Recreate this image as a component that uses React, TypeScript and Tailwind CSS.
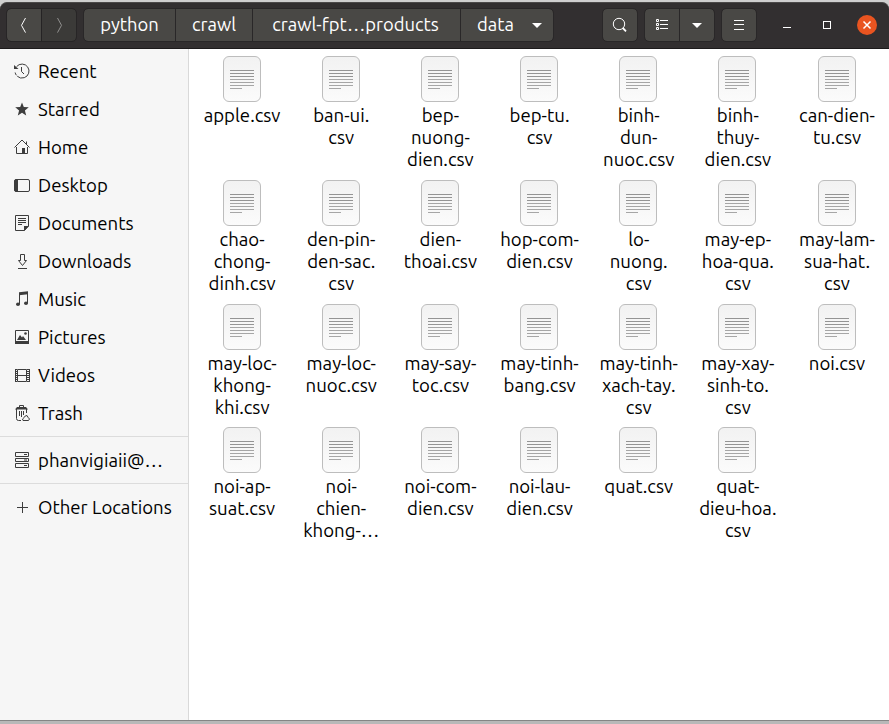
import type { ReactNode } from "react";

const FONT = "font-['Ubuntu','Noto_Sans',sans-serif]";

function Icon({ children, className = "" }: { children: ReactNode; className?: string }) {
  return (
    <svg width="16" height="16" viewBox="0 0 16 16" fill="none" stroke="currentColor" className={`shrink-0 ${className}`}>
      {children}
    </svg>
  );
}

const places: { name: string; icon: ReactNode }[] = [
  {
    name: "Recent",
    icon: (
      <>
        <path d="M2.600 3.600A7 7 0 1 1 1 8.500" strokeDasharray="33 1.3 3 1.3" />
        <path d="M0 2v4h4.500z" fill="currentColor" stroke="none" />
        <path d="M7.500 4v4.500l2.500 2.500" />
      </>
    ),
  },
  {
    name: "Starred",
    icon: <path d="M8 1.500l1.800 4.500 5 .3-3.900 3.200 1.300 4.900L8 11.700l-4.200 2.700 1.300-4.900-3.900-3.200 5-.3z" fill="currentColor" stroke="none" />,
  },
  {
    name: "Home",
    icon: (
      <>
        <path d="M.5 8.500L8 1l7.500 7.500M2.500 8v6.500h11V8M12.500 5V2.500" />
        <path d="M8 9h3v6H8z" fill="currentColor" stroke="none" />
      </>
    ),
  },
  {
    name: "Desktop",
    icon: (
      <>
        <rect x=".5" y="2.500" width="15" height="12" rx="1.500" />
        <path d="M1 3h2.500v11H1z" fill="currentColor" />
      </>
    ),
  },
  {
    name: "Documents",
    icon: (
      <>
        <path d="M1.500 .5h13v10.500l-4 4.500h-9z" />
        <path d="M4 3.500h8M4 5.500h8M4 7.500h8M4 9.500h4" />
        <path d="M10 11h5l-5 5z" fill="currentColor" stroke="none" />
      </>
    ),
  },
  {
    name: "Downloads",
    icon: <path d="M6.500 1.500h4v6h2L8.500 12.500l-4-5h2zM4 15.500h9" />,
  },
  {
    name: "Music",
    icon: (
      <>
        <path d="M5.500 13V2.500M13.500 1.500V12" />
        <path d="M5 1.200L14 .2V3.200L5 4.200z" fill="currentColor" stroke="none" />
        <ellipse cx="4" cy="13.300" rx="2" ry="1.700" fill="currentColor" stroke="none" />
        <ellipse cx="12" cy="12.300" rx="2" ry="1.700" fill="currentColor" stroke="none" />
      </>
    ),
  },
  {
    name: "Pictures",
    icon: (
      <>
        <path d="M1.500 1.500h13v13h-13z" />
        <path d="M1 12h14v3H1zM3 11l3-5 2 2.500L9 7l3 4z" fill="currentColor" stroke="none" />
        <circle cx="11.500" cy="4.500" r="1.300" fill="currentColor" stroke="none" />
      </>
    ),
  },
  {
    name: "Videos",
    icon: (
      <>
        <path d="M3.500 2.500h9v12h-9zM3 8.500h10" />
        <path d="M2 2v13M14 2v13" strokeWidth="2" strokeDasharray="1 1" />
        <path d="M1.500 2v13M15.500 2v13" />
      </>
    ),
  },
  {
    name: "Trash",
    icon: (
      <>
        <path d="M5.500 2V.5h4V2" />
        <path d="M3 2h9l2 2.500H1z" fill="currentColor" stroke="none" />
        <path d="M2.500 4v9.500a2 2 0 0 0 2 2H7M12.500 4v4M5.500 6v5M7.500 6v6M9.500 6v4" />
        <path d="M9 15.500h5.500L15.500 14l-1.500-1.700-1-1.800-1.800.5-1 1.500L8.500 14z" />
      </>
    ),
  },
];

const files: string[][][] = [
  [["apple.csv"], ["ban-ui.", "csv"], ["bep-", "nuong-", "dien.csv"], ["bep-tu.", "csv"], ["binh-", "dun-", "nuoc.csv"], ["binh-", "thuy-", "dien.csv"], ["can-dien-", "tu.csv"]],
  [["chao-", "chong-", "dinh.csv"], ["den-pin-", "den-sac.", "csv"], ["dien-", "thoai.csv"], ["hop-com-", "dien.csv"], ["lo-", "nuong.", "csv"], ["may-ep-", "hoa-qua.", "csv"], ["may-lam-", "sua-hat.", "csv"]],
  [["may-loc-", "khong-", "khi.csv"], ["may-loc-", "nuoc.csv"], ["may-say-", "toc.csv"], ["may-tinh-", "bang.csv"], ["may-tinh-", "xach-tay.", "csv"], ["may-xay-", "sinh-to.", "csv"], ["noi.csv"]],
  [["noi-ap-", "suat.csv"], ["noi-", "chien-", "khong-…"], ["noi-com-", "dien.csv"], ["noi-lau-", "dien.csv"], ["quat.csv"], ["quat-", "dieu-hoa.", "csv"]],
];

function Place({ name, icon }: { name: string; icon: ReactNode }) {
  return (
    <div className="flex h-[38px] items-center gap-2 pb-0.5 pl-3.5 text-[#3d3d3d]">
      <Icon>{icon}</Icon>
      <span className="pt-0.5 whitespace-nowrap leading-[22px] text-black">{name}</span>
    </div>
  );
}

function File({ lines }: { lines: string[] }) {
  return (
    <div className="flex w-[99.17px] flex-col items-center">
      <div className="flex h-[46px] w-[38px] flex-col gap-0.5 rounded-[6px] border border-[#bdbdbd] bg-linear-to-b from-[#f2f2f2] to-[#fbfbfb] px-1.5 pt-[13px]">
        {["w-6", "w-6", "w-6", "w-6", "w-6", "w-6", "w-3"].map((w, i) => (
          <div key={i} className={`h-px shrink-0 ${i < 3 ? "bg-[#949494]" : "bg-[#a6a6a6]"} ${w}`} />
        ))}
      </div>
      <div className="mt-[3px] ml-px text-center leading-[22px] whitespace-nowrap">
        {lines.map((l) => (
          <div key={l}>{l}</div>
        ))}
      </div>
    </div>
  );
}

const button = "flex h-8 items-center justify-center";
const raised = "bg-[#494845] text-white";

function Caret() {
  return (
    <svg width="10" height="5" viewBox="0 0 10 5" className="shrink-0">
      <path d="M0 0h10L5 5z" fill="white" />
    </svg>
  );
}

export default function App() {
  return (
    <div className={`flex h-[724px] w-[889px] flex-col overflow-hidden bg-[#b8b8b8] text-[18.6px] text-black ${FONT}`}>
      <div className="h-[49px] shrink-0 bg-[#cfcfcf] pt-0.5 text-[18.4px]">
        <header className="flex h-[47px] items-center rounded-t-[7px] border-t border-b border-t-[#4b4949] border-b-[#1c1a1b] bg-[#322f30] pb-px pl-[7px]">
          <div className="flex gap-px rounded-[4px] bg-[#252324] outline outline-[#272526]">
            <div className={`${button} ${raised} w-[34px] rounded-l-[4px]`}>
              <Icon><path d="M9.500 1L5.500 8.300l4 7.300" /></Icon>
            </div>
            <div className={`${button} w-[34px] rounded-r-[4px] bg-[#3b3a38] text-[#91908f]`}>
              <Icon><path d="M6.500 1l4 7.300L6.500 15.600" /></Icon>
            </div>
          </div>
          <div className="ml-2 flex gap-px rounded-[4px] bg-[#292728] outline outline-[#292728]">
            <div className={`${button} ${raised} w-[91px] rounded-l-[4px]`}>python</div>
            <div className={`${button} ${raised} w-[76px]`}>crawl</div>
            <div className={`${button} ${raised} w-[207px] pr-0.5`}>crawl-fpt…products</div>
            <div className={`${button} ${raised} w-[92px] gap-[18px] rounded-r-[4px] pl-[5px]`}>data<Caret /></div>
          </div>
          <div className={`${button} ${raised} ml-[50px] w-[34px] rounded-[4px] outline outline-[#292728]`}>
            <Icon><circle cx="7" cy="7" r="5.700" /><path d="M10.800 11l3.200 3.300" strokeWidth="1.800" /></Icon>
          </div>
          <div className="ml-2 flex gap-px rounded-[4px] bg-[#292728] outline outline-[#292728]">
            <div className={`${button} ${raised} w-[34px] rounded-l-[4px]`}>
              <Icon><path d="M6 3.500h8M6 7.500h8M6 11.500h8M2.500 2.500h2v2h-2zM2.500 6.500h2v2h-2zM2.500 10.500h2v2h-2z" /></Icon>
            </div>
            <div className={`${button} ${raised} w-[34px] rounded-r-[4px]`}><Caret /></div>
          </div>
          <div className={`${button} ${raised} ml-2 w-[34px] rounded-[4px] outline outline-[#292728]`}>
            <Icon><path d="M3 3.500h10M3 7.500h10M3 12.500h10" /></Icon>
          </div>
          <div className="mt-1 ml-[27px] h-px w-2 bg-white" />
          <div className="ml-8 size-2 border border-white" />
          <div className="ml-[26px] flex size-5 items-center justify-center rounded-full bg-[#e95420] text-white">
            <Icon><path d="M4.500 4.500l7 7m0-7l-7 7" strokeWidth="1.500" /></Icon>
          </div>
        </header>
      </div>
      <div className="flex h-[671px] shrink-0">
        <aside className="w-[189px] shrink-0 border-r border-[#d9d9d9] bg-[#f6f6f6] pt-1">
          {places.map((p) => (
            <Place key={p.name} name={p.name} icon={p.icon} />
          ))}
          <div className="mt-[3px] mb-[5px] h-px bg-[#dcdcdc]" />
          <Place name="phanvigiaii@…" icon={<path d="M1.500 .5h13v4h-13zM1.500 6.500h13v3h-13zM1.500 11.500h13v4h-13zM10 2.500h3M10 8h3M10 13.500h3" />} />
          <div className="mt-[3px] mb-[5px] h-px bg-[#dcdcdc]" />
          <Place name="Other Locations" icon={<path d="M8.500 3v11M3 8.500h11" />} />
        </aside>
        <main className="flex-1 bg-white pt-[7px] pl-[3px]">
          {files.map((row, i) => (
            <div key={i} className={`flex h-[124px] items-start ${i === 3 ? "-mt-px" : ""}`}>
              {row.map((lines) => (
                <File key={lines.join("")} lines={lines} />
              ))}
            </div>
          ))}
        </main>
      </div>
      <div className="h-px shrink-0 bg-[#858585]" />
    </div>
  );
}
